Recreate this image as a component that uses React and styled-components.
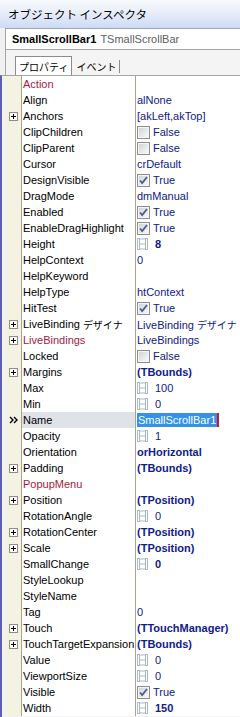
import React from 'react';
import styled, { createGlobalStyle } from 'styled-components';

const Global = createGlobalStyle`
  html, body { margin: 0; padding: 0; background: #f0f0f0; overflow: hidden; }
  #root { width: 240px; height: 717px; }
`;

const Window = styled.div`
  width: 240px;
  height: 717px;
  display: flex;
  flex-direction: column;
  overflow: hidden;
  background: #f0f0f0;
  font-family: "Liberation Sans", "Noto Sans CJK JP", sans-serif;
  font-size: 11px;
`;

const TitleBar = styled.div`
  flex: none;
  height: 28px;
  box-sizing: border-box;
  display: flex;
  align-items: center;
  padding-left: 8px;
  background: linear-gradient(to bottom, #f8fafd 0%, #e8eef9 45%, #ccdbf5 100%);
  font-family: "Noto Sans CJK JP", sans-serif;
  font-size: 11.5px;
  color: #000;
  white-space: nowrap;
`;

const Header = styled.div`
  flex: none;
  margin-left: 5px;
  height: 22px;
  box-sizing: border-box;
  border: 1px solid #a5a5a5;
  border-right: none;
  background: #fff;
  display: flex;
  align-items: center;
  gap: 4px;
  padding-left: 6px;
  white-space: nowrap;
  overflow: hidden;
`;

const CompName = styled.span`
  font-weight: bold;
  color: #000;
`;

const CompType = styled.span`
  color: #606060;
`;

const TabBar = styled.div`
  flex: none;
  height: 25px;
  box-sizing: border-box;
  margin-left: 5px;
  border-left: 1px solid #a5a5a5;
  display: flex;
  align-items: flex-end;
  padding-left: 9px;
  background: #f4f4f4;
`;

const Tab = styled.div`
  box-sizing: border-box;
  display: flex;
  align-items: center;
  font-family: "Noto Sans CJK JP", sans-serif;
  font-size: 10px;
  color: #000;
  white-space: nowrap;
  ${(p) =>
    p.$active
      ? `
    height: 19px;
    padding: 0 3px;
    background: #fff;
    border: 1px solid #8c8c8c;
    border-bottom: none;
  `
      : `
    height: 13px;
    margin-bottom: 2px;
    padding: 0 3px 0 4px;
    border-right: 1px solid #8c8c8c;
  `}
`;

const Grid = styled.div`
  flex: 1;
  min-height: 0;
  display: flex;
  flex-direction: column;
  border-left: 2px solid #5b5fae;
  border-top: 1px solid #a5a5a5;
  padding-left: 4px;
  background: #f2f2f2;
  overflow: hidden;
`;

const Row = styled.div`
  flex: none;
  height: 16px;
  display: grid;
  grid-template-columns: 16px 114px 1fr;
`;

const Gutter = styled.div`
  box-sizing: border-box;
  background: #f4f3e3;
  border-right: 1px solid #a9a58d;
  display: flex;
  align-items: center;
  justify-content: center;
`;

const NameCell = styled.div`
  box-sizing: border-box;
  border-right: 1px solid #a9a58d;
  padding-left: 1px;
  display: flex;
  align-items: center;
  white-space: nowrap;
  overflow: hidden;
  background: ${(p) => (p.$selected ? '#dfe2e6' : '#fff')};
  color: ${(p) => (p.$red ? '#a3213f' : '#000')};
`;

const ValueCell = styled.div`
  padding-left: 1px;
  display: flex;
  align-items: center;
  gap: ${(p) => (p.$spin ? '7px' : '3px')};
  white-space: nowrap;
  overflow: hidden;
  background: #fff;
  color: #10208a;
  font-weight: ${(p) => (p.$bold ? 'bold' : 'normal')};
`;

const Jp = styled.span`
  font-family: "Noto Sans CJK JP", sans-serif;
  font-size: 10px;
  margin-left: 3px;
`;

const EditSel = styled.span`
  display: inline-flex;
  align-items: center;
  height: 14px;
  padding: 0 1px;
  background: #3492ea;
  color: #fff;
  border-right: 2px solid #b8232b;
`;

const ExpandBox = () => (
  <svg width="9" height="9" viewBox="0 0 9 9">
    <rect x="0.5" y="0.5" width="8" height="8" fill="#fff" stroke="#8c8c8c" />
    <path d="M2 4.5h5M4.5 2v5" stroke="#000" strokeWidth="1" />
  </svg>
);

const SelArrow = () => (
  <svg width="10" height="8" viewBox="0 0 10 8">
    <path d="M1 1l3 3-3 3M5 1l3 3-3 3" fill="none" stroke="#000" strokeWidth="1.4" />
  </svg>
);

const CheckBox = ({ checked }) => (
  <svg width="13" height="13" viewBox="0 0 13 13" style={{ flex: 'none' }}>
    <defs>
      <linearGradient id="cbg" x1="0" y1="0" x2="1" y2="1">
        <stop offset="0" stopColor="#d2d4d8" />
        <stop offset="1" stopColor="#f8f8f8" />
      </linearGradient>
    </defs>
    <rect x="0.5" y="0.5" width="12" height="12" fill="#f4f4f4" stroke="#8e8f8f" />
    <rect x="2" y="2" width="9" height="9" fill="url(#cbg)" />
    {checked && (
      <path d="M3 6.5l2.2 2.5L10 3" fill="none" stroke="#4a5f86" strokeWidth="1.8" />
    )}
  </svg>
);

const SpinIcon = () => (
  <svg width="11" height="12" viewBox="0 0 11 12" style={{ flex: 'none' }}>
    <g fill="none" stroke="#a9b8c6" strokeWidth="1">
      <rect x="0.5" y="0.5" width="2" height="11" />
      <rect x="8.5" y="0.5" width="2" height="11" />
      <path d="M3 1h5.5M3 6h5.5M3 11h5.5" />
    </g>
  </svg>
);

const rows = [
  { n: 'Action', red: true },
  { n: 'Align', v: 'alNone' },
  { n: 'Anchors', v: '[akLeft,akTop]', exp: true },
  { n: 'ClipChildren', v: 'False', t: 'check' },
  { n: 'ClipParent', v: 'False', t: 'check' },
  { n: 'Cursor', v: 'crDefault' },
  { n: 'DesignVisible', v: 'True', t: 'check', c: true },
  { n: 'DragMode', v: 'dmManual' },
  { n: 'Enabled', v: 'True', t: 'check', c: true },
  { n: 'EnableDragHighlight', v: 'True', t: 'check', c: true },
  { n: 'Height', v: '8', t: 'spin', b: true },
  { n: 'HelpContext', v: '0' },
  { n: 'HelpKeyword' },
  { n: 'HelpType', v: 'htContext' },
  { n: 'HitTest', v: 'True', t: 'check', c: true },
  { n: 'LiveBinding', jp: 'デザイナ', v: 'LiveBinding', vjp: 'デザイナ', exp: true },
  { n: 'LiveBindings', v: 'LiveBindings', exp: true, red: true },
  { n: 'Locked', v: 'False', t: 'check' },
  { n: 'Margins', v: '(TBounds)', exp: true, b: true },
  { n: 'Max', v: '100', t: 'spin' },
  { n: 'Min', v: '0', t: 'spin' },
  { n: 'Name', v: 'SmallScrollBar1', t: 'edit', sel: true },
  { n: 'Opacity', v: '1', t: 'spin' },
  { n: 'Orientation', v: 'orHorizontal', b: true },
  { n: 'Padding', v: '(TBounds)', exp: true, b: true },
  { n: 'PopupMenu', red: true },
  { n: 'Position', v: '(TPosition)', exp: true, b: true },
  { n: 'RotationAngle', v: '0', t: 'spin' },
  { n: 'RotationCenter', v: '(TPosition)', exp: true, b: true },
  { n: 'Scale', v: '(TPosition)', exp: true, b: true },
  { n: 'SmallChange', v: '0', t: 'spin', b: true },
  { n: 'StyleLookup' },
  { n: 'StyleName' },
  { n: 'Tag', v: '0' },
  { n: 'Touch', v: '(TTouchManager)', exp: true, b: true },
  { n: 'TouchTargetExpansion', v: '(TBounds)', exp: true, b: true },
  { n: 'Value', v: '0', t: 'spin' },
  { n: 'ViewportSize', v: '0', t: 'spin' },
  { n: 'Visible', v: 'True', t: 'check', c: true },
  { n: 'Width', v: '150', t: 'spin', b: true },
];

const Value = ({ r }) => {
  if (r.t === 'check')
    return (
      <ValueCell>
        <CheckBox checked={r.c} />
        <span>{r.v}</span>
      </ValueCell>
    );
  if (r.t === 'spin')
    return (
      <ValueCell $spin $bold={r.b}>
        <SpinIcon />
        <span>{r.v}</span>
      </ValueCell>
    );
  if (r.t === 'edit')
    return (
      <ValueCell>
        <EditSel>{r.v}</EditSel>
      </ValueCell>
    );
  return (
    <ValueCell $bold={r.b}>
      <span>
        {r.v}
        {r.vjp && <Jp>{r.vjp}</Jp>}
      </span>
    </ValueCell>
  );
};

export default function App() {
  return (
    <>
      <Global />
      <Window>
        <TitleBar>オブジェクト インスペクタ</TitleBar>
        <Header>
          <CompName>SmallScrollBar1</CompName>
          <CompType>TSmallScrollBar</CompType>
        </Header>
        <TabBar>
          <Tab $active>プロパティ</Tab>
          <Tab>イベント</Tab>
        </TabBar>
        <Grid>
          {rows.map((r) => (
            <Row key={r.n}>
              <Gutter>
                {r.exp && <ExpandBox />}
                {r.sel && <SelArrow />}
              </Gutter>
              <NameCell $selected={r.sel} $red={r.red}>
                {r.n}
                {r.jp && <Jp>{r.jp}</Jp>}
              </NameCell>
              <Value r={r} />
            </Row>
          ))}
        </Grid>
      </Window>
    </>
  );
}
